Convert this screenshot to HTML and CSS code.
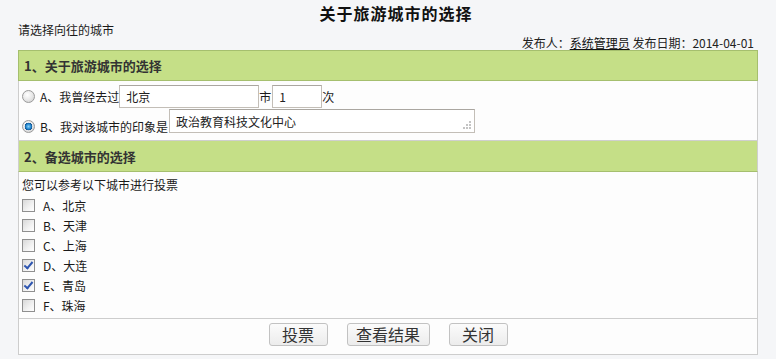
FILE: index.html
```html
<!DOCTYPE html>
<html lang="zh-CN">
<head>
<meta charset="utf-8">
<title>关于旅游城市的选择</title>
<link rel="stylesheet" href="styles.css">
</head>
<body>
<div class="page">
  <h1 class="title">关于旅游城市的选择</h1>
  <div class="intro">请选择向往的城市</div>
  <div class="meta">发布人：<a class="author" href="#">系统管理员</a> 发布日期：2014-04-01</div>

  <div class="panel">
    <div class="sec-head first">1、关于旅游城市的选择</div>
    <div class="sec-body sec1">
      <div class="opt row-a">
        <input class="radio" type="radio" name="q1">
        <span class="lbl">A、我曾经去过</span><input class="txt city" type="text" value="北京"><span>市</span><input class="txt times" type="text" value="1"><span>次</span>
      </div>
      <div class="opt row-b">
        <input class="radio" type="radio" name="q1" checked>
        <span class="lbl">B、我对该城市的印象是</span><textarea class="impression">政治教育科技文化中心</textarea>
      </div>
    </div>

    <div class="sec-head second">2、备选城市的选择</div>
    <div class="sec-body sec2">
      <div class="hint">您可以参考以下城市进行投票</div>
      <div class="check"><input class="cb" type="checkbox"><span>A、北京</span></div>
      <div class="check"><input class="cb" type="checkbox"><span>B、天津</span></div>
      <div class="check"><input class="cb" type="checkbox"><span>C、上海</span></div>
      <div class="check"><input class="cb" type="checkbox" checked><span>D、大连</span></div>
      <div class="check"><input class="cb" type="checkbox" checked><span>E、青岛</span></div>
      <div class="check"><input class="cb" type="checkbox"><span>F、珠海</span></div>
    </div>

    <div class="actions">
      <button class="btn" type="button">投票</button>
      <button class="btn wide" type="button">查看结果</button>
      <button class="btn" type="button">关闭</button>
    </div>
  </div>
</div>
</body>
</html>
```

FILE: styles.css
```css
* { box-sizing: border-box; }

html, body {
  margin: 0;
  padding: 0;
  background: #f5f6f8;
}

body {
  font-family: "SimSun", "Noto Sans CJK SC", "Liberation Sans", sans-serif;
  font-size: 12px;
  color: #1a1a1a;
}

.page {
  width: 776px;
}

.title {
  margin: 0;
  padding: 3px 0 0 16px;
  height: 24px;
  line-height: 20px;
  font-size: 16px;
  font-weight: bold;
  letter-spacing: 1px;
  text-align: center;
  color: #111;
}

.intro {
  padding-left: 18px;
  height: 12px;
  line-height: 12px;
}

.meta {
  height: 14px;
  line-height: 14px;
  padding-right: 22px;
  text-align: right;
  color: #222;
}

.author {
  color: #111;
  text-decoration: underline;
}

.panel {
  margin: 0 18px;
  background: #fdfdfd;
}

.sec-head {
  display: flex;
  align-items: center;
  padding-left: 5px;
  background: #c5df87;
  font-size: 13px;
  font-weight: bold;
  color: #333;
}

.sec-head.first {
  height: 31px;
  border: 1px solid #a5bf6e;
}

.sec-head.second {
  height: 32px;
  border: 1px solid #cfcfcf;
  border-bottom-color: #a5bf6e;
}

.sec-body {
  border-left: 1px solid #cdcdcd;
  border-right: 1px solid #cdcdcd;
}

.sec1 {
  padding: 4px 0 7px 3px;
}

.opt {
  display: flex;
  white-space: nowrap;
}

.row-a {
  height: 23px;
  align-items: center;
}

.row-b {
  margin-top: 1px;
  height: 24px;
  align-items: flex-end;
}

.row-b .lbl {
  line-height: 14px;
  margin-bottom: -1px;
}

.lbl {
  margin-left: 5px;
}

.radio {
  -webkit-appearance: none;
  appearance: none;
  margin: 0;
  width: 13px;
  height: 13px;
  border-radius: 50%;
  border: 1px solid #9a9a9a;
  background: radial-gradient(circle at 40% 35%, #ffffff 0%, #e6e6e6 55%, #c9c9c9 100%);
  flex: none;
}

.radio:checked {
  background:
    radial-gradient(circle at 50% 50%, #8fd0f5 0%, #2a8ed4 30%, #10508f 48%, transparent 52%),
    radial-gradient(circle at 40% 35%, #ffffff 0%, #e6e6e6 55%, #c9c9c9 100%);
}

.txt {
  margin: 0;
  height: 23px;
  padding: 0 6px;
  border: 1px solid #c3beb7;
  border-top-color: #aaa6a0;
  background: #fff;
  font: inherit;
  font-size: 12px;
  color: #222;
  outline: none;
}

.city { width: 140px; }
.times { width: 50px; margin-left: 1px; }

.impression {
  margin: 0 0 0 1px;
  width: 306px;
  height: 24px;
  padding: 4px 6px 0;
  border: 1px solid #c3beb7;
  border-top-color: #aaa6a0;
  font: inherit;
  font-size: 12px;
  line-height: 16px;
  color: #222;
  overflow: hidden;
  resize: none;
  background-color: #fff;
  background-image:
    linear-gradient(#c4c4c4, #c4c4c4),
    linear-gradient(#c4c4c4, #c4c4c4),
    linear-gradient(#c4c4c4, #c4c4c4),
    linear-gradient(#c4c4c4, #c4c4c4),
    linear-gradient(#c4c4c4, #c4c4c4),
    linear-gradient(#c4c4c4, #c4c4c4);
  background-size: 2px 2px;
  background-repeat: no-repeat;
  background-position:
    right 3px bottom 3px,
    right 6px bottom 3px,
    right 9px bottom 3px,
    right 3px bottom 6px,
    right 6px bottom 6px,
    right 3px bottom 9px;
}

.sec2 {
  padding: 3px 0 3px 3px;
}

.hint {
  height: 20px;
  line-height: 20px;
}

.check {
  display: flex;
  align-items: center;
  height: 20px;
}

.cb {
  -webkit-appearance: none;
  appearance: none;
  position: relative;
  margin: 0 8px 0 0;
  width: 13px;
  height: 13px;
  border: 1px solid #8f8f8f;
  background: linear-gradient(135deg, #d8d8d8 0%, #f2f2f2 60%, #ffffff 100%);
  flex: none;
}

.cb:checked::after {
  content: "";
  position: absolute;
  left: 3px;
  top: 0;
  width: 3px;
  height: 7px;
  border-right: 2px solid #2f56b0;
  border-bottom: 2px solid #2f56b0;
  transform: rotate(40deg);
}

.actions {
  display: flex;
  justify-content: center;
  gap: 19px;
  padding: 4px 0 8px;
  border: 1px solid #cdcdcd;
}

.btn {
  margin: 0;
  width: 59px;
  height: 23px;
  padding: 0;
  border: 1px solid #c2c2c2;
  border-radius: 3px;
  background: linear-gradient(#fbfbfb, #ececec);
  font-family: "SimSun", "Noto Sans CJK SC", sans-serif;
  font-size: 16px;
  line-height: 21px;
  color: #333;
}

.btn.wide { width: 83px; }
```
